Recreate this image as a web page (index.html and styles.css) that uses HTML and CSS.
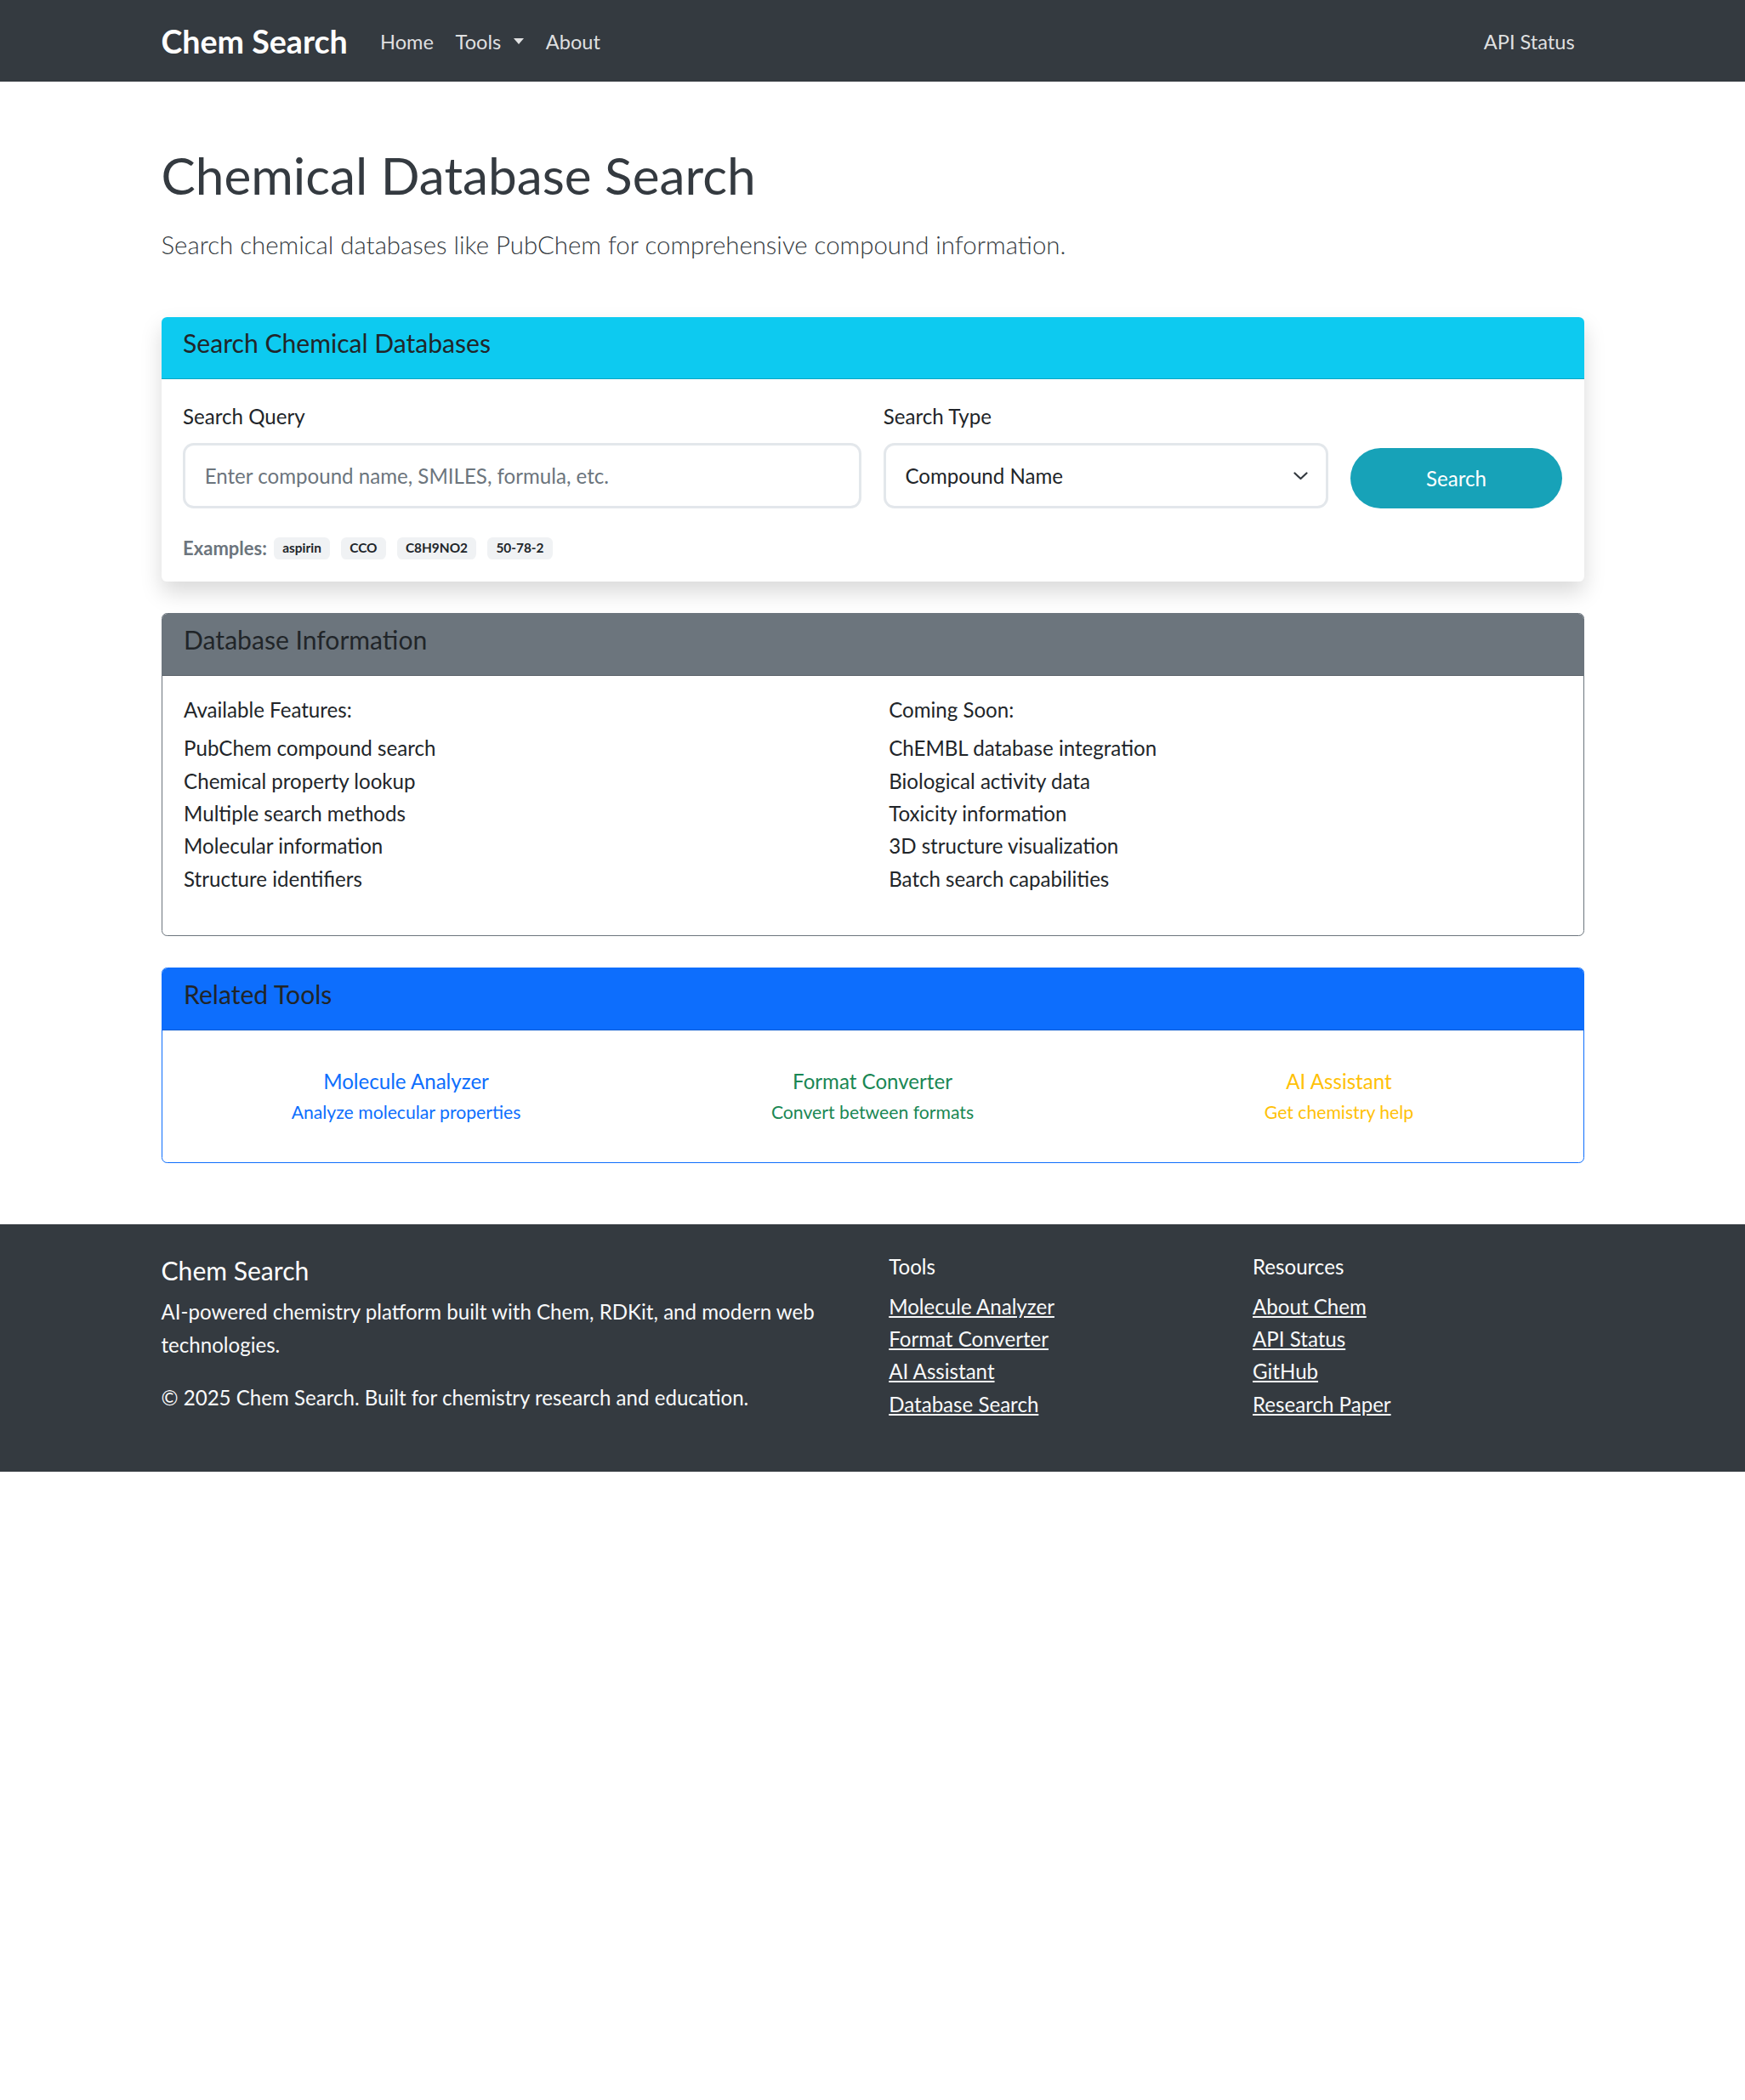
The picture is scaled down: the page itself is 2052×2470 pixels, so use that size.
FILE: index.html
```html
<!DOCTYPE html>
<html lang="en">
<head>
<meta charset="utf-8">
<title>Chemical Database Search - Chem Search</title>
<link rel="stylesheet" href="styles.css">
</head>
<body>
<nav class="navbar">
  <div class="container navbar-inner">
    <a class="brand" href="#">Chem Search</a>
    <ul class="nav-menu">
      <li><a class="nav-link" href="#">Home</a></li>
      <li><a class="nav-link dropdown-toggle" href="#">Tools</a></li>
      <li><a class="nav-link" href="#">About</a></li>
    </ul>
    <ul class="nav-menu nav-right">
      <li><a class="nav-link" href="#">API Status</a></li>
    </ul>
  </div>
</nav>

<main class="container page">
  <h1 class="page-title">Chemical Database Search</h1>
  <p class="lead">Search chemical databases like PubChem for comprehensive compound information.</p>

  <section class="card card-shadow">
    <div class="card-header header-info"><h5 class="card-title">Search Chemical Databases</h5></div>
    <div class="card-body search-body">
      <form class="search-row">
        <div class="col-query">
          <label class="form-label" for="q">Search Query</label>
          <input id="q" class="form-control" type="text" placeholder="Enter compound name, SMILES, formula, etc.">
        </div>
        <div class="col-type">
          <label class="form-label">Search Type</label>
          <div class="form-select"><span>Compound Name</span><svg class="chevron" width="17" height="10" viewBox="0 0 17 10"><path d="M1.5 1.5 L8.5 8 L15.5 1.5" fill="none" stroke="#343a40" stroke-width="2.2" stroke-linecap="round" stroke-linejoin="round"/></svg></div>
        </div>
        <div class="col-btn">
          <button type="button" class="btn-search">Search</button>
        </div>
      </form>
      <div class="examples">
        <strong class="examples-label">Examples:</strong>
        <span class="badge">aspirin</span>
        <span class="badge">CCO</span>
        <span class="badge">C8H9NO2</span>
        <span class="badge">50-78-2</span>
      </div>
    </div>
  </section>

  <section class="card card-secondary">
    <div class="card-header header-secondary"><h5 class="card-title">Database Information</h5></div>
    <div class="card-body info-body">
      <div class="row">
        <div class="col-half">
          <h6 class="list-heading">Available Features:</h6>
          <ul class="plain-list">
            <li>PubChem compound search</li>
            <li>Chemical property lookup</li>
            <li>Multiple search methods</li>
            <li>Molecular information</li>
            <li>Structure identifiers</li>
          </ul>
        </div>
        <div class="col-half">
          <h6 class="list-heading">Coming Soon:</h6>
          <ul class="plain-list">
            <li>ChEMBL database integration</li>
            <li>Biological activity data</li>
            <li>Toxicity information</li>
            <li>3D structure visualization</li>
            <li>Batch search capabilities</li>
          </ul>
        </div>
      </div>
    </div>
  </section>

  <section class="card card-primary">
    <div class="card-header header-primary"><h5 class="card-title">Related Tools</h5></div>
    <div class="card-body tools-body">
      <div class="tools-row">
        <div class="tool-item">
          <a class="tool-title t-primary" href="#">Molecule Analyzer</a>
          <small class="tool-desc t-primary">Analyze molecular properties</small>
        </div>
        <div class="tool-item">
          <a class="tool-title t-success" href="#">Format Converter</a>
          <small class="tool-desc t-success">Convert between formats</small>
        </div>
        <div class="tool-item">
          <a class="tool-title t-warning" href="#">AI Assistant</a>
          <small class="tool-desc t-warning">Get chemistry help</small>
        </div>
      </div>
    </div>
  </section>
</main>

<footer class="footer">
  <div class="container">
    <div class="row">
      <div class="col-half">
        <h5 class="footer-title">Chem Search</h5>
        <p class="footer-text">AI-powered chemistry platform built with Chem, RDKit, and modern web technologies.</p>
        <p class="footer-text">&copy; 2025 Chem Search. Built for chemistry research and education.</p>
      </div>
      <div class="col-quarter">
        <h6 class="footer-heading">Tools</h6>
        <ul class="footer-links">
          <li><a href="#">Molecule Analyzer</a></li>
          <li><a href="#">Format Converter</a></li>
          <li><a href="#">AI Assistant</a></li>
          <li><a href="#">Database Search</a></li>
        </ul>
      </div>
      <div class="col-quarter">
        <h6 class="footer-heading">Resources</h6>
        <ul class="footer-links">
          <li><a href="#">About Chem</a></li>
          <li><a href="#">API Status</a></li>
          <li><a href="#">GitHub</a></li>
          <li><a href="#">Research Paper</a></li>
        </ul>
      </div>
    </div>
  </div>
</footer>
</body>
</html>
```

FILE: styles.css
```css
* { box-sizing: border-box; }

body {
  margin: 0;
  font-family: "Lato", "Liberation Sans", sans-serif;
  font-size: 24.1px;
  line-height: 38.4px;
  color: #212529;
  background: #fff;
}

.container {
  width: 1673px;
  margin: 0 auto;
}

/* Navbar */
.navbar {
  background: #343a40;
  height: 96px;
}
.navbar-inner {
  display: flex;
  align-items: center;
  height: 100%;
  padding-top: 2px;
}
.brand {
  font-size: 37.6px;
  line-height: 57.6px;
  font-weight: 700;
  color: #fff;
  text-decoration: none;
  margin-right: 25.6px;
}
.nav-menu {
  display: flex;
  list-style: none;
  margin: 0;
  padding: 0;
}
.nav-right {
  margin-left: auto;
  margin-right: -2px;
}
.nav-link {
  display: block;
  padding: 0 12.8px;
  font-size: 23.6px;
  line-height: 38.4px;
  color: rgba(255, 255, 255, 0.85);
  text-decoration: none;
}
.dropdown-toggle::after {
  content: "";
  display: inline-block;
  margin-left: 15px;
  vertical-align: 6px;
  border-top: 7px solid;
  border-left: 6px solid transparent;
  border-right: 6px solid transparent;
}

/* Page header */
.page {
  padding-top: 71.6px;
  padding-bottom: 71.7px;
}
.page-title {
  font-size: 60.3px;
  line-height: 76.8px;
  font-weight: 400;
  color: #343a40;
  margin: 0 0 20.1px;
}
.lead {
  font-size: 29.4px;
  line-height: 48px;
  font-weight: 300;
  color: #343a40;
  margin: 0 0 60.2px;
}

/* Cards */
.card {
  background: #fff;
  border-radius: 6.4px;
  overflow: hidden;
  margin-bottom: 37.4px;
}
.card-shadow {
  box-shadow: 0 12.8px 25.6px rgba(0, 0, 0, 0.15);
}
.card-secondary {
  border: 1px solid #6c757d;
  margin-bottom: 36.6px;
}
.card-primary {
  border: 1px solid #0d6efd;
  margin-bottom: 0;
}
.card-header {
  padding: 11.4px 25.6px 22.6px;
  border-bottom: 1px solid rgba(0, 0, 0, 0.175);
}
.header-info { background: #0dcaf0; }
.header-secondary { background: #6c757d; }
.header-primary { background: #0d6efd; }
.card-title {
  margin: 0;
  font-size: 30.1px;
  line-height: 38.4px;
  font-weight: 400;
  color: #212529;
}

/* Search form */
.search-body {
  padding: 25px 25.6px 25.6px;
}
.search-row {
  display: flex;
  align-items: flex-end;
  margin: 0 -12.8px;
}
.search-row > div {
  padding: 0 12.8px;
}
.col-query { width: 50%; }
.col-type { width: 33.3333%; }
.col-btn { width: 16.6667%; }
.form-label {
  display: block;
  line-height: 38.4px;
  margin-bottom: 12px;
}
.form-control {
  display: block;
  width: 100%;
  height: 76.8px;
  border: 3px solid #e3e7eb;
  border-radius: 12.8px;
  padding: 0 22.6px;
  font-family: inherit;
  font-size: 24.1px;
  color: #212529;
  background: #fff;
  outline: none;
}
.form-control::placeholder {
  color: #6c757d;
  opacity: 1;
}
.form-select {
  display: flex;
  align-items: center;
  justify-content: space-between;
  height: 76.8px;
  border: 3px solid #e3e7eb;
  border-radius: 12.8px;
  padding: 0 21px 0 22.6px;
  background: #fff;
}
.chevron {
  display: block;
}
.btn-search {
  display: block;
  width: 100%;
  height: 71.7px;
  border: 0;
  border-radius: 40px;
  background: #17a2b8;
  color: #fff;
  font-family: inherit;
  font-size: 24.1px;
}
.examples {
  display: flex;
  align-items: center;
  height: 26px;
  margin-top: 33.8px;
  font-size: 22px;
}
.examples-label {
  color: #6c757d;
  font-weight: 700;
  margin-right: 8px;
}
.badge {
  background: #f0f2f4;
  color: #212529;
  font-weight: 700;
  font-size: 15.4px;
  line-height: 1;
  padding: 5.3px 10.4px;
  border-radius: 6.4px;
  margin-right: 12.6px;
}

/* Database info */
.info-body {
  padding: 24.5px 25.6px 26px;
}
.row {
  display: flex;
  margin: 0 -19.2px;
}
.col-half {
  width: 50%;
  padding: 0 19.2px;
}
.col-quarter {
  width: 25%;
  padding: 0 19.2px;
}
.list-heading {
  font-size: 24.1px;
  line-height: 30.7px;
  font-weight: 400;
  margin: 0 0 10.5px;
}
.plain-list {
  list-style: none;
  padding: 0;
  margin: 0 0 21px;
}

/* Related tools */
.tools-body {
  padding: 40.6px 25.6px 41px;
}
.tools-row {
  display: grid;
  grid-template-columns: repeat(3, 1fr);
  column-gap: 25.6px;
  text-align: center;
}
.tool-title {
  display: block;
  font-size: 24.1px;
  line-height: 38.4px;
  margin-bottom: 1.3px;
  text-decoration: none;
}
.tool-desc {
  display: block;
  font-size: 21.2px;
  line-height: 33.6px;
}
.t-primary { color: #0d6efd; }
.t-success { color: #198754; }
.t-warning { color: #ffc107; }

/* Footer */
.footer {
  background: #343a40;
  color: #f8f9fa;
  padding: 35.1px 0;
}
.footer-title {
  font-size: 30.1px;
  line-height: 38.4px;
  font-weight: 400;
  color: #fff;
  margin: 0 0 11px;
}
.footer-text {
  margin: 0 0 23.5px;
}
.footer-heading {
  font-size: 24.1px;
  line-height: 30.7px;
  font-weight: 400;
  color: #fff;
  margin: 0 0 12px;
}
.footer-links {
  list-style: none;
  padding: 0;
  margin: 0 0 24.3px;
}
.footer-links a {
  color: #f8f9fa;
  text-decoration: underline;
}
```
